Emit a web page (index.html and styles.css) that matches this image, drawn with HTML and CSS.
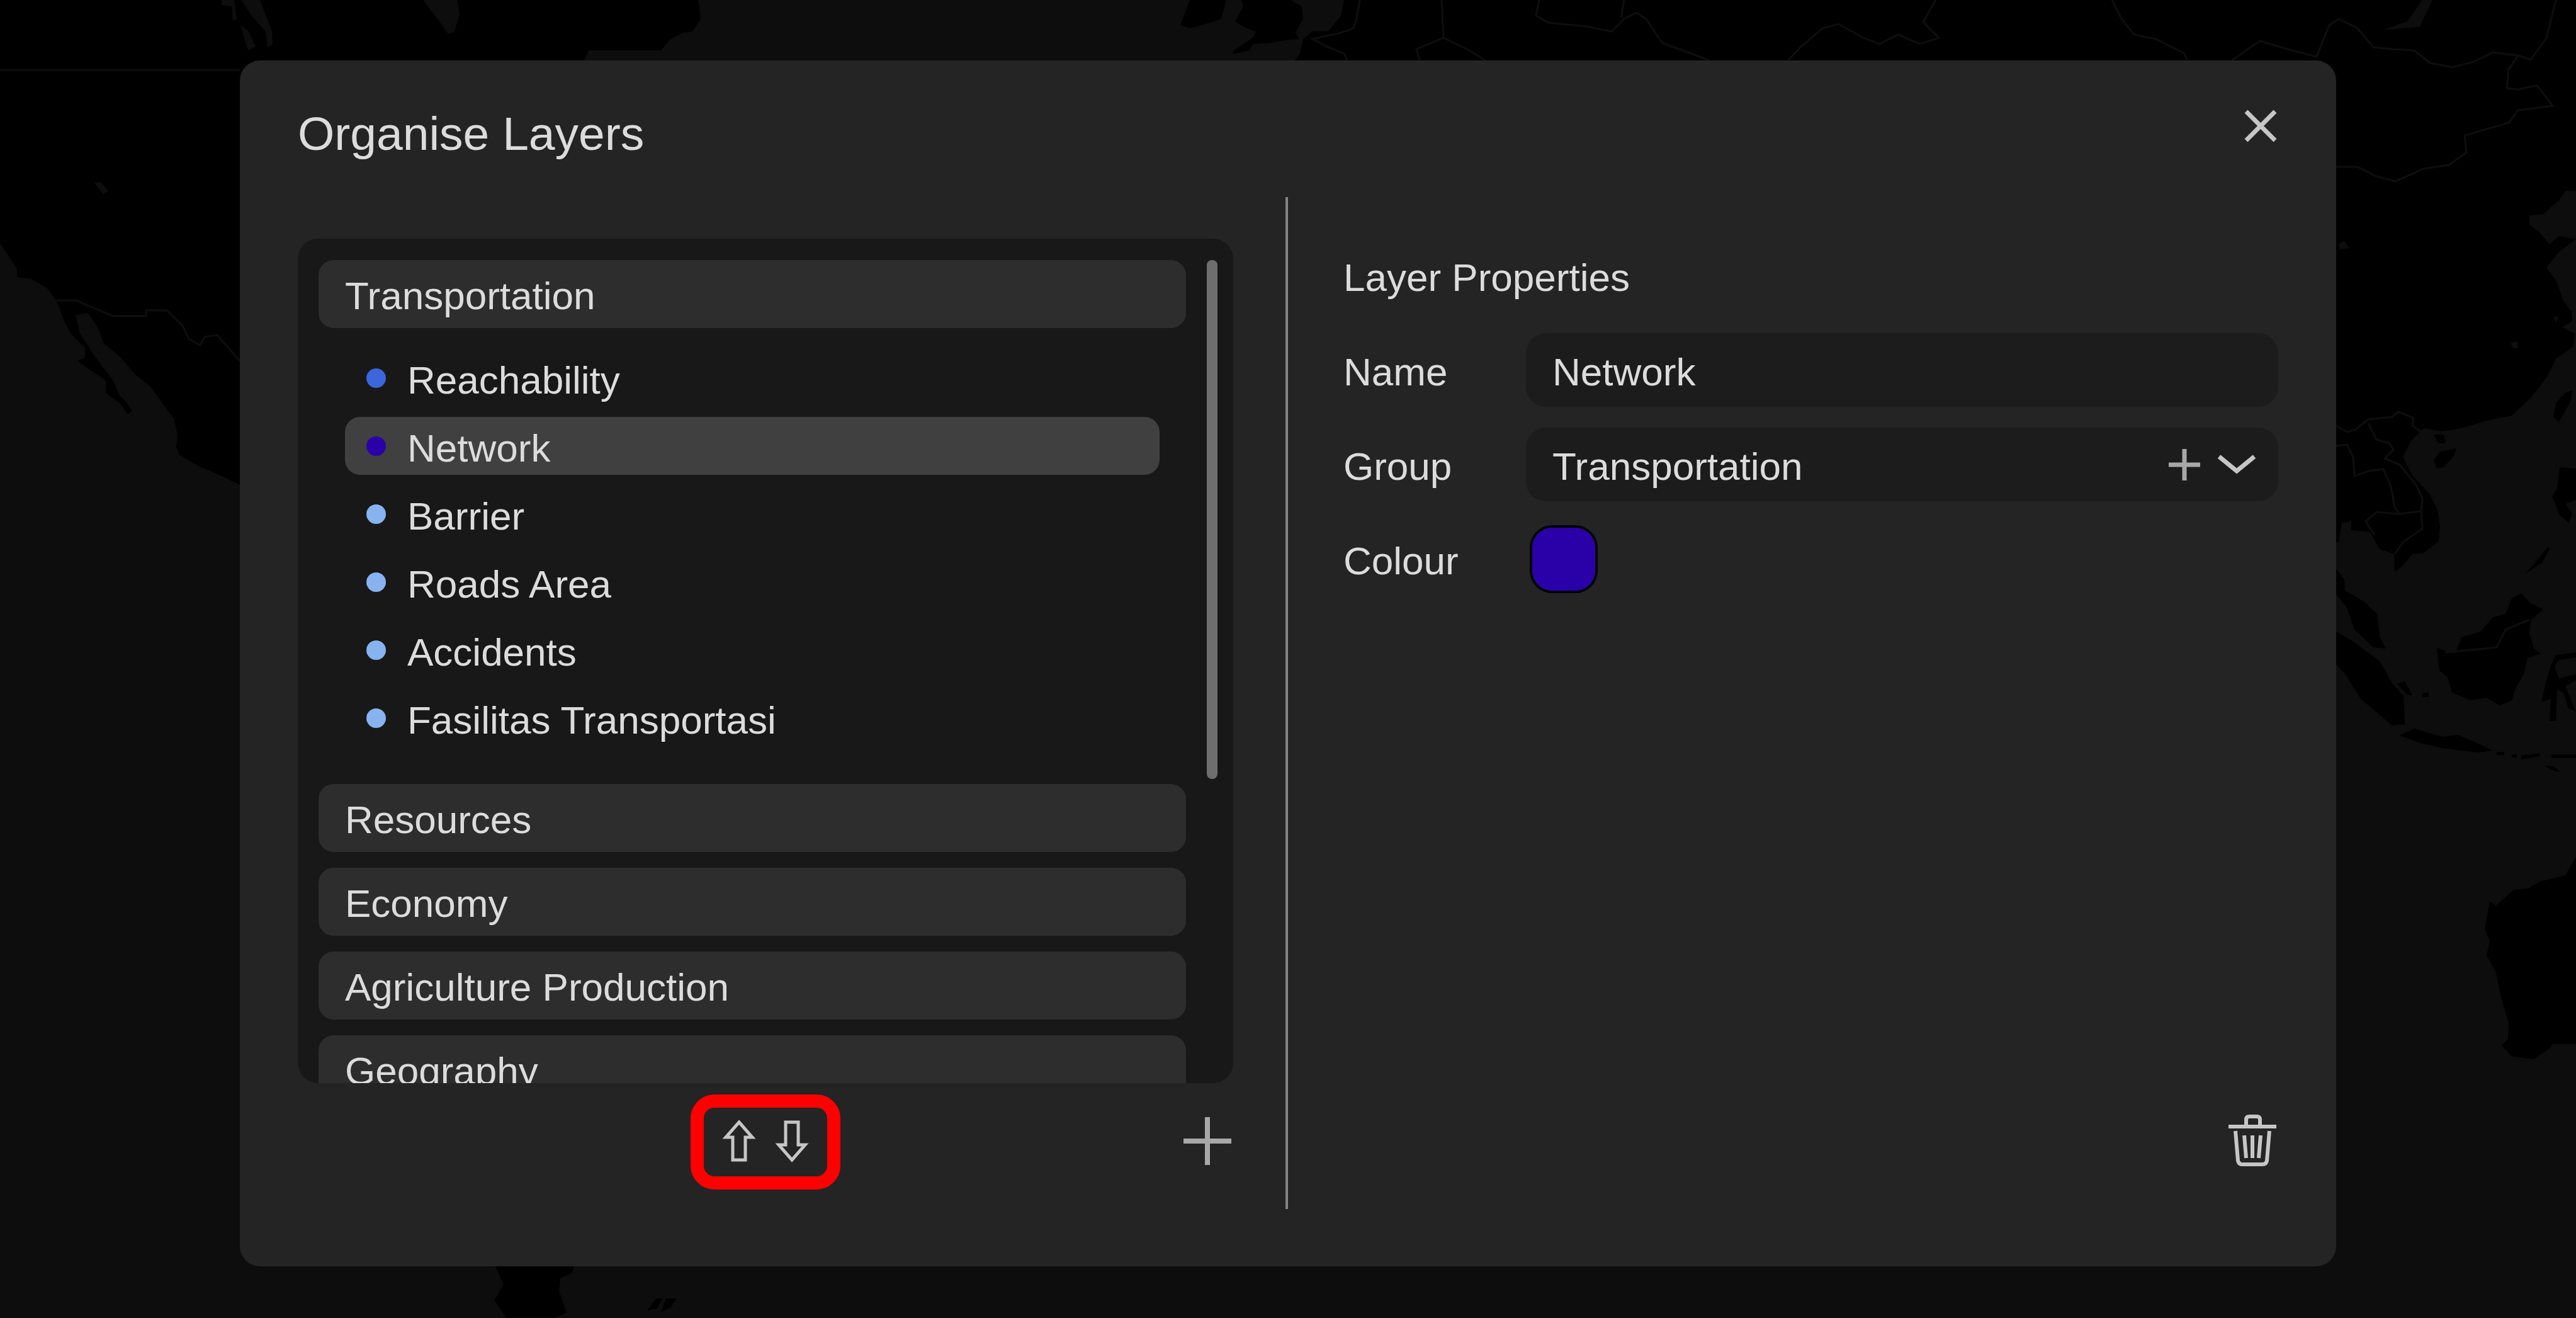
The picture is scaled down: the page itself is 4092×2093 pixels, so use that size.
FILE: index.html
```html
<!DOCTYPE html>
<html lang="en">
<head>
<meta charset="utf-8">
<meta name="viewport" content="width=device-width, initial-scale=1">
<title>Organise Layers</title>
<link rel="stylesheet" href="styles.css">
</head>
<body>
<svg class="map" viewBox="0 0 4092 2093" preserveAspectRatio="xMidYMid slice" aria-hidden="true">
  <g class="land">
    <path d="M0 0H4092V380L4065 400L4045 425L4060 445L4072 478L4085 495L4086 510L4070 520L4090 530L4088 550L4060 570L4045 600L4020 632L3990 660L3950 668L3910 680L3880 685L3850 680L3830 700L3817 725L3832 755L3860 785L3872 810L3876 835L3874 860L3850 878L3832 880L3815 900L3804 908L3803 880L3780 872L3765 845L3735 842L3735 828L3720 830L3715 860L3700 866H500V800L381 770L350 755L315 740L285 722L280 710L282 690L276 665L240 615L215 595L190 566L165 545L155 520L140 497L120 500L127 530L150 565L165 585L180 605L190 628L200 638L210 652L203 658L190 640L168 624V604L140 585L123 573L135 568V552L112 530L102 510L90 478L75 458L50 443L27 440V427L0 386Z"/>
    <path d="M3866 690h16l3 14h-12zM3866 731l10-14 26-5-4 12-16 18-12 2z"/>
    <path d="M4060 640l14-16 12-4-2 16-14 26-6 8-8-8zM4066 742l26 2v50l-16 6 10 16-6 14-14-12-12-30 8-12z"/>
    <path d="M4048 868l-18 22-18 20 26-16 12-22z"/>
    <path d="M3700 890L3724 920L3725 938L3755 955L3776 975L3780 1010L3790 1030L3770 1028L3740 1000L3728 965L3700 930Z"/>
    <path d="M3700 996L3740 1020L3780 1050L3800 1085L3818 1105L3820 1150L3800 1152L3750 1110L3725 1070L3700 1044ZM3808 1086l12-4 12 22-8 0zM3848 1100h10v7h-10z"/>
    <path d="M3871 1029L3900 1038L3910 1012L3940 1003L3960 980L3980 975L3990 950L4005 942L4020 958L4040 967L4020 985L4018 1005L4025 1030L4036 1038L4015 1045L4010 1068L3995 1095L3990 1113L3970 1120L3950 1108L3925 1112L3895 1100L3888 1075L3875 1065Z"/>
    <path d="M3812 1168L3835 1157L3880 1170L3905 1167L3935 1180L3960 1192L3935 1195L3880 1188L3845 1180ZM3966 1194h12v5h-12zM3990 1198h8v5h-8zM4005 1200l30-4v5l-30 5zM4053 1198h39v6h-39zM4042 1216l14 1 12 9-12-2z"/>
    <path d="M4053 1055L4060 1040L4092 1036V1044L4065 1048L4058 1058L4065 1078L4092 1070V1080L4075 1090L4092 1130L4080 1125L4072 1100L4062 1095L4060 1145L4050 1145L4052 1110L4037 1115L4045 1080Z"/>
    <path d="M4092 1360L4075 1390L4035 1400L4015 1411L3993 1413L3965 1438L3955 1432L3947 1475L3955 1495L3950 1517L3965 1545L3972 1580L3985 1625L3984 1650L3974 1660L3990 1678L4025 1682L4050 1665L4055 1658H4092Z"/>
    <path d="M782 2000L800 2040L785 2065L805 2093H880L900 2085L888 2050L890 2030L908 2022L916 2000ZM1028 2081l14-19h10l-8 16zM1050 2084l8-22h16l-8 14z"/>
  </g>
  <g class="sea">
    <path d="M1109 0L1113 30L1100 50L1085 52L1065 62L1050 80L935 80L922 110H2045L2065 85L2070 62L2085 50L2110 50L2130 25L2135 0H2050L2068 10L2070 30L2058 52L2064 62L2040 64L2020 68L1990 70L1985 80L1958 86L1960 80L1990 60L1995 50L1980 45L1962 34L1975 10L1972 0H1948L1940 30L1915 38L1890 45L1875 40L1890 0Z"/>
    <path d="M352 0h20l4 30-6 3-2-23-16-2zM383 0h30l19 50 1 20-8 6-3-26-22-25zM382 40l12 8 12 26-12 6zM150 290l10-1 12 14-8 6zM672 0h54l4 22-8 28-10 4-14-20z"/>
    <path d="M4092 303l-17 0-10 15-25 22-22 2v15l17 13 15 18 15-13 27 5zM3716 388l8-6 8 12-16 2zM3988 545l10-4 2 12h-8zM4056 502l8 2-4 8zM3848 0h16l-20 42-60 6 40-14z"/>
  </g>
  <g class="border">
    <path d="M0 111H381M90 477H120L180 502H232V493H265L290 517L300 538L318 548L325 535L345 532L365 555L381 573"/>
    <path d="M2160 0L2155 30L2150 45L2130 52L2085 62L2110 75L2135 85L2140 96M2290 0L2293 60L2250 78L2255 96M2293 60L2330 78L2360 96M2445 0L2440 25L2460 36L2520 42L2560 50L2580 30L2600 20L2615 30L2640 68L2700 90L2715 96M2580 0L2575 28"/>
    <path d="M3075 0L3055 35L3080 60L3050 70L3015 55L2985 70L2960 60L2920 38L2895 45L2860 75L2840 96M3355 0L3370 30L3390 55L3425 62L3470 85L3475 96"/>
    <path d="M3545 96L3590 65L3640 80L3680 90L3700 40L3715 30L3745 45L3770 75L3800 78L3835 80L3860 100L3895 107L3930 98L3960 83L4000 88L3985 110L3982 140L4000 142L4030 136L4055 168L4000 175L3985 195L3950 205L3915 215L3918 242L3890 262L3850 268L3805 288L3775 280L3745 265L3711 265M4060 0L4045 60L4020 95L4000 88"/>
    <path d="M3711 676L3728 686L3742 682L3762 666L3800 662L3810 654L3834 664L3832 676L3850 688M3762 672L3775 698L3796 704L3802 714L3788 728L3812 738L3838 770L3848 792L3846 812L3812 816L3804 806L3798 772L3786 745L3762 748L3740 756L3738 726L3728 706L3711 708M3812 816L3775 813L3758 828L3772 850M3846 812L3848 840L3818 860L3804 880M3884 1036L3926 1032L3966 1028L3980 1000L4018 984"/>
  </g>
</svg>

<main class="overlay">
  <section class="dialog" role="dialog" aria-labelledby="dialog-title">
    <header class="dialog-header">
      <h1 class="title" id="dialog-title">Organise Layers</h1>
      <button class="icon-button close" type="button" aria-label="Close">
        <svg viewBox="0 0 56 56" width="56" height="56"><path d="M5 5L51 51M51 5L5 51" stroke-width="7"/></svg>
      </button>
    </header>

    <div class="dialog-body">
      <div class="layers-pane">
        <div class="layer-box">
          <div class="layer-scroll">
            <section class="group open">
              <h2 class="group-name">Transportation</h2>
              <ul class="layers">
                <li class="layer"><span class="dot royal"></span>Reachability</li>
                <li class="layer selected"><span class="dot indigo"></span>Network</li>
                <li class="layer"><span class="dot sky"></span>Barrier</li>
                <li class="layer"><span class="dot sky"></span>Roads Area</li>
                <li class="layer"><span class="dot sky"></span>Accidents</li>
                <li class="layer"><span class="dot sky"></span>Fasilitas Transportasi</li>
              </ul>
            </section>
            <section class="group"><h2 class="group-name">Resources</h2></section>
            <section class="group"><h2 class="group-name">Economy</h2></section>
            <section class="group"><h2 class="group-name">Agriculture Production</h2></section>
            <section class="group"><h2 class="group-name">Geography</h2></section>
          </div>
          <div class="scroll-thumb"></div>
        </div>
        <footer class="list-actions">
          <div class="reorder">
            <button class="icon-button" type="button" aria-label="Move up">
              <svg viewBox="0 0 68 68" width="68" height="68"><path d="M34 4L55 28H44V64H24V28H13Z" stroke-width="5"/></svg>
            </button>
            <button class="icon-button" type="button" aria-label="Move down">
              <svg viewBox="0 0 68 68" width="68" height="68"><path d="M34 64L55 40H44V4H24V40H13Z" stroke-width="5"/></svg>
            </button>
          </div>
          <button class="icon-button add-group" type="button" aria-label="Add group">
            <svg viewBox="0 0 82 82" width="82" height="82"><path d="M41 3V79M3 41H79" stroke-width="8"/></svg>
          </button>
        </footer>
      </div>

      <form class="properties-pane">
        <h2 class="pane-title">Layer Properties</h2>
        <div class="fields">
          <label class="label" for="layer-name">Name</label>
          <input class="field" id="layer-name" type="text" value="Network">
          <label class="label" for="layer-group">Group</label>
          <div class="select-wrap">
            <select class="field" id="layer-group">
              <option>Transportation</option>
              <option>Resources</option>
              <option>Economy</option>
              <option>Agriculture Production</option>
              <option>Geography</option>
            </select>
            <div class="select-icons">
              <button class="icon-button soft" type="button" aria-label="New group">
                <svg viewBox="0 0 50 50" width="50" height="50"><path d="M25 0V50M0 25H50" stroke-width="7"/></svg>
              </button>
              <svg class="chevron" viewBox="0 0 60 34" width="60" height="34"><path d="M2 4L30 27L58 4" stroke-width="7"/></svg>
            </div>
          </div>
          <label class="label" for="layer-colour">Colour</label>
          <div class="swatch-cell"><input class="swatch" id="layer-colour" type="color" value="#2a00a8"></div>
        </div>
        <footer class="properties-actions">
          <button class="icon-button" type="button" aria-label="Delete layer">
            <svg viewBox="0 0 82 82" width="82" height="82">
              <path d="M3 19H79" stroke-width="6"/>
              <path d="M31 17V8Q31 3 36 3H48Q53 3 53 8V17M14 26L18 73Q19 79 25 79H57Q63 79 64 73L68 26M28 33L31 69M41 33V69M54 33L51 69" stroke-width="6"/>
            </svg>
          </button>
        </footer>
      </form>
    </div>
  </section>
</main>
</body>
</html>
```
FILE: styles.css
```css
* {
  box-sizing: border-box;
}

body {
  margin: 0;
  background: #0d0d0d;
  color: #dcdcdc;
  font-family: "Liberation Sans", Arial, sans-serif;
  font-size: 62px;
}

h1,
h2,
ul {
  margin: 0;
  padding: 0;
  font-weight: normal;
  list-style: none;
}

/* Map behind the dialog */
.map {
  position: absolute;
  inset: 0;
  width: 100%;
  height: 100%;
}

.land {
  fill: #000;
}

.sea {
  fill: #0d0d0d;
}

.border {
  fill: none;
  stroke: #0e0e0e;
  stroke-width: 3;
}

.overlay {
  position: relative;
  display: flex;
  height: 100vh;
  padding: 96px 381px 82px;
}

.dialog {
  display: flex;
  flex: 1;
  flex-direction: column;
  padding: 0 92px 91px;
  border-radius: 32px;
  background: #242424;
}

.dialog-header {
  display: flex;
  justify-content: space-between;
  align-items: flex-start;
  height: 217px;
  padding-top: 70px;
}

.title {
  font-size: 75px;
  line-height: 92px;
}

.close {
  margin-top: 6px;
}

.dialog-body {
  display: grid;
  flex: 1;
  grid-template-columns: 1fr 1fr;
  grid-template-rows: minmax(0, 1fr);
  min-height: 0;
}

.icon-button {
  display: block;
  padding: 0;
  border: 0;
  background: none;
  color: #c6c6c6;
}

.icon-button svg,
.chevron {
  display: block;
  fill: none;
  stroke: currentColor;
}

/* Layer list */
.layers-pane {
  display: flex;
  flex-direction: column;
  padding: 66px 83px 0 0;
  border-right: 4px solid #858585;
}

.layer-box {
  display: flex;
  flex: 1;
  gap: 33px;
  min-height: 0;
  padding: 0 25px 0 33px;
  border-radius: 32px;
  background: #181818;
}

.layer-scroll {
  flex: 1;
  padding-top: 34px;
  overflow-y: auto;
  scrollbar-width: none;
}

.scroll-thumb {
  width: 17px;
  height: 824px;
  margin-top: 34px;
  border-radius: 8px;
  background: #6e6e6e;
}

.group {
  margin-bottom: 25px;
}

.group.open {
  margin-bottom: 59px;
}

.group-name {
  padding: 6px 42px 0;
  border-radius: 24px;
  background: #2d2d2d;
  font-size: 62px;
  line-height: 102px;
}

.layers {
  display: flex;
  flex-direction: column;
  gap: 16px;
  padding: 33px 42px 0;
}

.layer {
  display: flex;
  align-items: center;
  gap: 33px;
  height: 92px;
  padding: 6px 33px 0;
  border-radius: 24px;
}

.layer.selected {
  background: #404040;
}

.dot {
  width: 31px;
  height: 31px;
  margin: 0 1px 6px;
  border-radius: 50%;
}

.royal {
  background: #3d65dc;
}

.indigo {
  background: #2a00a8;
}

.sky {
  background: #87b3f0;
}

.list-actions {
  display: grid;
  grid-template-columns: 1fr auto 1fr;
  align-items: center;
  padding: 18px 0 31px;
}

.reorder {
  display: flex;
  grid-column: 2;
  align-items: center;
  gap: 16px;
  height: 151px;
  padding: 0 22px 4px;
  border: 21px solid #f00;
  border-radius: 38px;
}

.add-group {
  justify-self: end;
  padding-bottom: 4px;
}

.add-group,
.soft {
  color: #a8a8a8;
}

/* Layer properties */
.properties-pane {
  display: flex;
  flex-direction: column;
  padding: 92px 0 68px 88px;
}

.pane-title {
  margin-bottom: 52px;
  font-size: 62px;
  line-height: 72px;
}

.fields {
  display: grid;
  grid-template-columns: 290px 1fr;
  row-gap: 33px;
}

.label {
  padding-top: 6px;
  line-height: 111px;
}

.field {
  display: block;
  width: 100%;
  height: 117px;
  padding: 6px 42px 0;
  border: 0;
  border-radius: 32px;
  outline: 0;
  appearance: none;
  background: #1c1c1c;
  color: inherit;
  font: inherit;
}

.select-wrap {
  position: relative;
}

.select-icons {
  position: absolute;
  top: 0;
  right: 36px;
  display: flex;
  align-items: center;
  gap: 28px;
  height: 117px;
  pointer-events: none;
}

.select-icons .icon-button {
  pointer-events: auto;
}

.chevron {
  color: #c6c6c6;
}

.swatch-cell {
  display: flex;
  align-items: center;
  padding-left: 6px;
}

.swatch {
  width: 108px;
  height: 108px;
  padding: 0;
  border: 4px solid #000;
  border-radius: 36px;
  appearance: none;
  background: #2a00a8;
  overflow: hidden;
}

.swatch::-webkit-color-swatch-wrapper {
  padding: 0;
}

.swatch::-webkit-color-swatch {
  border: 0;
}

.properties-actions {
  display: flex;
  justify-content: flex-end;
  margin-top: auto;
}
```
